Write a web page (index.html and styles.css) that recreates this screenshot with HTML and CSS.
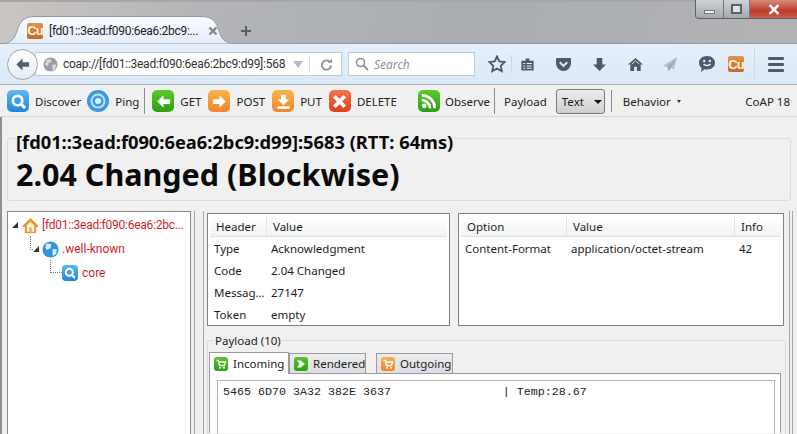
FILE: index.html
```html
<!DOCTYPE html>
<html lang="en">
<head>
<meta charset="utf-8">
<title>Copper</title>
<link rel="stylesheet" href="styles.css">
</head>
<body>
<div class="window">
  <header class="titlebar">
    <div class="tab">
      <svg class="tab-shape" viewBox="0 0 230 28" preserveAspectRatio="none"><defs><linearGradient id="tabfill" x1="0" y1="0" x2="0" y2="1"><stop offset="0" stop-color="#f7fafd"/><stop offset="1" stop-color="#e3eefa"/></linearGradient></defs><path d="M0 28C8 27 12 22 14 15 17 5 21 .5 32 .5H198C209 .5 213 5 216 15 218 22 222 27 230 28Z" fill="url(#tabfill)" stroke="#8f9aa5" stroke-width="1"/></svg>
      <span class="cu cu-tab">Cu</span>
      <span class="tab-title">[fd01::3ead:f090:6ea6:2bc9:...</span>
      <svg class="tab-close" viewBox="0 0 10 10"><path d="M1.500 1.500l7 7M8.500 1.500l-7 7" stroke="#7d8790" stroke-width="2.400"/></svg>
    </div>
    <svg class="newtab" viewBox="0 0 12 12"><path d="M6 1v10M1 6h10" stroke="#55606b" stroke-width="2"/></svg>
    <div class="winctl">
      <span class="wbtn wmin"><i></i></span>
      <span class="wbtn wmax"><i></i></span>
      <span class="wbtn wclose">
        <svg viewBox="0 0 12 10"><path d="M2 1l8 8M10 1l-8 8" stroke="#fff" stroke-width="2.400"/></svg>
      </span>
    </div>
  </header>

  <nav class="navbar">
    <span class="back"><svg viewBox="0 0 16 16"><path d="M8 1.500L1.500 8 8 14.500V10.500h7v-5H8z" fill="#525f6c"/></svg></span>
    <div class="urlbar">
      <svg class="globe" viewBox="0 0 16 16"><circle cx="8" cy="8" r="7.500" fill="#9a9ea3"/><path d="M4 3l4-1 1 3-3 2-1 3-3-2zM10 8l4 0-1 5-3 1z" fill="#d6d8da"/></svg>
      <span class="url">coap://[fd01::3ead:f090:6ea6:2bc9:d99]:568</span>
      <svg class="dropdown" viewBox="0 0 10 7"><path d="M0 0h10L5 7z" fill="#b7bdc3"/></svg>
      <span class="url-sep"></span>
      <svg class="reload" viewBox="0 0 14 14"><path d="M11 4.500A5 5 0 1 0 12 8" fill="none" stroke="#8a9199" stroke-width="2"/><path d="M8.500 5H13V.8z" fill="#8a9199"/></svg>
    </div>
    <div class="searchbar">
      <svg class="lens" viewBox="0 0 14 14"><circle cx="5.500" cy="5.500" r="4" fill="none" stroke="#8b929a" stroke-width="1.600"/><path d="M8.500 8.500l4.500 4.500" stroke="#8b929a" stroke-width="2"/></svg>
      <span class="search-text">Search</span>
    </div>
    <div class="navicons">
      <svg class="nav-star" viewBox="0 0 18 18"><path d="M9 1.500l2.300 5 5.400.6-4 3.700 1.100 5.400L9 13.500l-4.800 2.700 1.100-5.400-4-3.700 5.400-.6z" fill="none" stroke="#4d5a67" stroke-width="1.800"/></svg>
      <span class="nav-sep"></span>
      <svg class="nav-list" viewBox="0 0 16 16"><path d="M1.500 4h13v10.500h-13zM6 1.500h4v3H6z" fill="#4d5a67"/><path d="M3.500 6.500h2v1h-2zM7 6.500h5.500v1H7zM3.500 9h2v1h-2zM7 9h5.500v1H7zM3.500 11.500h2v1h-2zM7 11.500h5.500v1H7z" fill="#e8f0f8"/></svg>
      <svg class="nav-pocket" viewBox="0 0 18 16"><path d="M1 2.500Q1 1 2.500 1h13Q17 1 17 2.500V7a8 8 0 0 1-16 0z" fill="#4d5a67"/><path d="M5 5.500l4 4 4-4" fill="none" stroke="#d9e6f2" stroke-width="2.200"/></svg>
      <svg class="nav-down" viewBox="0 0 16 16"><path d="M5 1h6v7h4l-7 7-7-7h4z" fill="#4d5a67"/></svg>
      <svg class="nav-home" viewBox="0 0 18 16"><path d="M9 1L1 8h2.500v7h4v-4.500h3V15h4V8H17z" fill="#4d5a67"/><path d="M5 7.500l4-3.300 4 3.300" fill="none" stroke="#dfe9f3" stroke-width="1"/></svg>
      <svg class="nav-send" viewBox="0 0 18 18"><path d="M17 1L1 11l5 1.500 1.500 4.500 2.500-3.500 3.500 1.500z" fill="#b5c0ca"/><path d="M17 1L6 12.500l1.500 4.500 2.500-3.500z" fill="#9eabb7"/></svg>
      <svg class="nav-chat" viewBox="0 0 18 18"><path d="M9 1c4.500 0 8 2.800 8 6.800S13.500 14.500 9 14.500c-.8 0-1.500-.1-2.200-.2L3 17l.6-4C2 11.800 1 10 1 7.800 1 3.800 4.500 1 9 1z" fill="#4d5a67"/><circle cx="6.200" cy="6" r="1.200" fill="#e8f0f8"/><circle cx="11.800" cy="6" r="1.200" fill="#e8f0f8"/><path d="M5.500 9c1.500 2 5.500 2 7 0" fill="none" stroke="#e8f0f8" stroke-width="1.300"/></svg>
      <span class="cu cu-nav">Cu</span>
      <span class="nav-sep nav-sep-menu"></span>
      <span class="hamburger"><i></i><i></i><i></i></span>
    </div>
  </nav>

  <div class="toolbar">
    <button class="tool tool-discover"><span class="ico ico-blue"><svg viewBox="0 0 20 20"><circle cx="9" cy="9" r="5" fill="none" stroke="#fff" stroke-width="2.800"/><path d="M12.500 12.500l4.500 4.500" stroke="#fff" stroke-width="3.200"/></svg></span><span>Discover</span></button>
    <button class="tool tool-ping"><span class="ico ico-ring"><svg viewBox="0 0 22 22"><circle cx="11" cy="11" r="7.500" fill="#c4e2fa"/><circle cx="11" cy="11" r="5.500" fill="#3b9be6"/><circle cx="11" cy="11" r="3" fill="#e4f2fe"/></svg></span><span>Ping</span></button>
    <span class="tsep"></span>
    <button class="tool"><span class="ico ico-green"><svg viewBox="0 0 20 20"><path d="M10 3.500L3.500 10 10 16.500V12.500h7v-5h-7z" fill="#fff"/></svg></span><span>GET</span></button>
    <button class="tool"><span class="ico ico-orange"><svg viewBox="0 0 20 20"><path d="M10 3.500L16.500 10 10 16.500V12.500H3v-5h7z" fill="#fff"/></svg></span><span>POST</span></button>
    <button class="tool"><span class="ico ico-orange"><svg viewBox="0 0 20 20"><path d="M7.500 3h5v5H16l-6 6-6-6h3.500zM3.500 15h13v2.500h-13z" fill="#fff"/></svg></span><span>PUT</span></button>
    <button class="tool"><span class="ico ico-red"><svg viewBox="0 0 20 20"><path d="M4.500 4.500l11 11M15.500 4.500l-11 11" stroke="#fff" stroke-width="4"/></svg></span><span>DELETE</span></button>
    <button class="tool tool-observe"><span class="ico ico-green"><svg viewBox="0 0 20 20"><circle cx="5.500" cy="14.500" r="2.500" fill="#fff"/><path d="M3 8.500A8.500 8.500 0 0 1 11.500 17M3 3.500A13.500 13.500 0 0 1 16.500 17" fill="none" stroke="#fff" stroke-width="3"/></svg></span><span>Observe</span></button>
    <span class="tsep tsep-observe"></span>
    <span class="tlabel">Payload</span>
    <button class="select">Text<span class="caret"></span></button>
    <span class="tsep tsep-select"></span>
    <span class="tlabel tlabel-behavior">Behavior<span class="caret-small"></span></span>
    <span class="version">CoAP 18</span>
  </div>

  <main class="content">
    <section class="status">
      <div class="status-addr">[fd01::3ead:f090:6ea6:2bc9:d99]:5683 (RTT: 64ms)</div>
      <div class="status-code">2.04 Changed (Blockwise)</div>
    </section>

    <div class="panes">
      <aside class="tree">
        <div class="node node-root">
          <span class="twisty"></span>
          <svg class="node-ico" viewBox="0 0 18 18"><path d="M9 1L0.500 9.500 2 11l1-1v7h12v-7l1 1 1.500-1.500z" fill="#f0902a"/><path d="M5 9l4-4 4 4v6.500H5z" fill="#fff3e0"/><path d="M7.500 11h3v4.500h-3z" fill="#f7b36a"/></svg>
          <span class="node-text node-text-root">[fd01::3ead:f090:6ea6:2bc...</span>
        </div>
        <div class="node node-l1">
          <span class="guide"></span>
          <span class="twisty"></span>
          <svg class="node-ico" viewBox="0 0 18 18"><circle cx="9" cy="9" r="8.500" fill="#2e95e8"/><path d="M5 2.500l5 1-1 4-4 2-1.500-3zM11 9l4.500-.5-.5 5-3.500 2.500z" fill="#e4f2fd"/></svg>
          <span class="node-text">.well-known</span>
        </div>
        <div class="node node-l2">
          <span class="guide"></span>
          <span class="ico ico-blue ico-small"><svg viewBox="0 0 20 20"><circle cx="9" cy="9" r="5" fill="none" stroke="#fff" stroke-width="2.800"/><path d="M12.500 12.500l4.500 4.500" stroke="#fff" stroke-width="3.200"/></svg></span>
          <span class="node-text">core</span>
        </div>
      </aside>

      <span class="splitter"></span>

      <div class="details">
        <div class="tables">
          <div class="tbox tbox-header">
            <div class="thead"><span class="th col-h1">Header</span><span class="th th-fill">Value</span></div>
            <div class="trow"><span class="col-h1">Type</span><span>Acknowledgment</span></div>
            <div class="trow"><span class="col-h1">Code</span><span>2.04 Changed</span></div>
            <div class="trow"><span class="col-h1">Messag...</span><span>27147</span></div>
            <div class="trow"><span class="col-h1">Token</span><span>empty</span></div>
          </div>
          <div class="tbox tbox-option">
            <div class="thead"><span class="th col-o1">Option</span><span class="th col-o2">Value</span><span class="th th-fill">Info</span></div>
            <div class="trow"><span class="col-o1">Content-Format</span><span class="col-o2">application/octet-stream</span><span>42</span></div>
          </div>
        </div>

        <section class="payload">
          <span class="legend">Payload (10)</span>
          <div class="tabs">
            <span class="ptab ptab-active"><span class="cart cart-green"><svg viewBox="0 0 12 12"><path d="M1.500 2.500h2l1 5h5l1-3.500h-6.500" fill="none" stroke="#fff" stroke-width="1.300"/><circle cx="5" cy="9.800" r="1" fill="#fff"/><circle cx="9" cy="9.800" r="1" fill="#fff"/></svg></span>Incoming</span>
            <span class="ptab ptab-rendered"><span class="cart cart-green"><svg viewBox="0 0 12 12"><path d="M2 2.500h3.500l4.500 3.500-4.500 3.500H2l2.500-3.500z" fill="#fff"/></svg></span>Rendered</span>
            <span class="ptab ptab-out"><span class="cart cart-orange"><svg viewBox="0 0 12 12"><path d="M1.500 2.500h2l1 5h5l1-3.500h-6.500" fill="none" stroke="#fff" stroke-width="1.300"/><circle cx="5" cy="9.800" r="1" fill="#fff"/><circle cx="9" cy="9.800" r="1" fill="#fff"/></svg></span>Outgoing</span>
          </div>
          <div class="tabpanel">
            <pre class="hexdump">5465 6D70 3A32 382E 3637                | Temp:28.67</pre>
          </div>
        </section>
      </div>
      <span class="edge"></span>
    </div>
  </main>
</div>
</body>
</html>
```
FILE: styles.css
```css
* { box-sizing: border-box; }
html, body { margin: 0; padding: 0; height: 100%; overflow: hidden; }
body { font-family: "Noto Sans", "Open Sans", sans-serif; font-size: 11.5px; color: #1d1d1d; background: #f0f0f0; }
.window { width: 797px; height: 434px; display: flex; flex-direction: column; overflow: hidden; }

/* Title bar */
.titlebar { height: 44px; flex: none; display: flex; align-items: flex-end; padding-left: 3px; background: linear-gradient(100deg, #c9c6c3 0%, #b3b5b8 25%, #a9adb2 60%, #b2b3b4 100%); border-top: 2px solid #a8a5a2; border-bottom: 1px solid #8e9aa6; position: relative; }
.tab { width: 230px; height: 28px; margin-bottom: -1px; display: flex; align-items: center; padding: 1px 0 0 24px; position: relative; z-index: 1; }
.tab-shape { position: absolute; left: 0; top: 0; width: 230px; height: 28px; }
.cu { display: inline-flex; align-items: center; justify-content: center; width: 16px; height: 16px; border-radius: 2px; background: linear-gradient(#e0934f, #c26a30); color: #fff3d0; font-size: 13px; font-weight: 700; letter-spacing: -1px; font-family: "Liberation Sans", sans-serif; flex: none; position: relative; }
.tab-title { margin-left: 6px; font-family: Roboto, sans-serif; font-size: 12px; letter-spacing: -0.3px; color: #222; white-space: nowrap; width: 153px; position: relative; }
.tab-close { width: 10px; height: 10px; margin-left: 6px; flex: none; position: relative; }
.newtab { width: 12px; height: 12px; margin: 0 0 6px 7px; }
.winctl { position: absolute; right: 0; top: -2px; display: flex; height: 19px; border: 1px solid #5f5f5f; border-top: 0; border-right: 0; border-radius: 0 0 0 4px; overflow: hidden; }
.wbtn { display: flex; align-items: center; justify-content: center; height: 100%; }
.wmin { width: 28px; background: linear-gradient(#d0d3d6, #a5a8ac); border-right: 1px solid #777; }
.wmin i { width: 11px; height: 4px; margin-top: 5px; background: #eef1f4; border: 1px solid #777; }
.wmax { width: 26px; background: linear-gradient(#d0d3d6, #a5a8ac); border-right: 1px solid #777; }
.wmax i { width: 11px; height: 10px; border: 2px solid #59626c; background: #dfe3e7; }
.wclose { width: 47px; background: linear-gradient(#d58a7e, #bf3a2a 60%, #c9604f); }
.wclose svg { width: 14px; height: 11px; }

/* Nav bar */
.navbar { height: 41px; flex: none; display: flex; align-items: center; padding-left: 7px; background: linear-gradient(#e5f0fb, #dbe8f5); border-bottom: 1px solid #aab2ba; position: relative; }
.back { width: 31px; height: 31px; border-radius: 50%; background: linear-gradient(#fff, #e4ebf2); border: 1px solid #9ba8b5; display: flex; align-items: center; justify-content: center; z-index: 1; flex: none; }
.back svg { width: 15px; height: 15px; }
.urlbar { width: 307px; height: 24px; margin-left: -3px; background: #fff; border: 1px solid #c3cdd7; display: flex; align-items: center; padding-left: 7px; flex: none; }
.globe { width: 15px; height: 15px; flex: none; }
.url { margin-left: 5px; font-family: Roboto, sans-serif; font-size: 12px; letter-spacing: -0.26px; color: #333; white-space: nowrap; width: 225px; flex: none; }
.dropdown { width: 10px; height: 7px; margin-left: 5px; flex: none; }
.url-sep { width: 1px; height: 17px; background: #d5dbe1; margin-left: 6px; flex: none; }
.reload { width: 13px; height: 13px; margin-left: 10px; flex: none; }
.searchbar { width: 127px; height: 24px; margin-left: 6px; background: #fff; border: 1px solid #c3cdd7; display: flex; align-items: center; padding-left: 6px; flex: none; }
.lens { width: 14px; height: 14px; flex: none; }
.search-text { margin-left: 5px; font-style: italic; color: #8f959b; font-size: 12px; }
.navicons { display: flex; align-items: center; margin-left: 13px; flex: none; }
.navicons svg { flex: none; }
.nav-star { width: 18px; height: 18px; }
.nav-sep { width: 1px; height: 18px; background: #cfd8e1; margin-left: 5px; }
.nav-list { width: 15px; height: 15px; margin-left: 8px; }
.nav-pocket { width: 17px; height: 15px; margin-left: 20px; }
.nav-down { width: 15px; height: 15px; margin-left: 20px; }
.nav-home { width: 17px; height: 15px; margin-left: 20px; }
.nav-send { width: 16px; height: 16px; margin-left: 18px; }
.nav-chat { width: 18px; height: 18px; margin-left: 20px; }
.cu-nav { margin-left: 12px; }
.nav-sep-menu { height: 32px; margin-left: 10px; }
.hamburger { display: flex; flex-direction: column; gap: 3px; margin-left: 13px; }
.hamburger i { display: block; width: 16px; height: 3px; border-radius: 1px; background: #4d5a67; }

/* Toolbar */
.toolbar { height: 32px; flex: none; display: flex; align-items: center; padding: 1px 0 0 7px; background: #f0f0f0; border-bottom: 1px solid #d6d6d6; font-size: 11.5px; }
.tool { display: flex; align-items: center; gap: 6px; padding: 0; border: 0; background: none; font: inherit; color: #222; margin-right: 7px; white-space: nowrap; }
.ico { width: 22px; height: 22px; border-radius: 5px; display: inline-flex; align-items: center; justify-content: center; flex: none; }
.ico svg { width: 19px; height: 19px; display: block; }
.ico-blue { background: linear-gradient(#5db8f5, #1c86dd); }
.ico-ring { border-radius: 50%; background: radial-gradient(#4ea8ea, #2b8fdc); }
.ico-ring svg { width: 22px; height: 22px; }
.ico-green { background: linear-gradient(#5ec92c, #2e9e12); }
.ico-orange { background: linear-gradient(#fab24a, #f0862a); }
.ico-red { background: linear-gradient(#f5734a, #e0401c); }
.tool-discover { margin-right: 6px; }
.tool-ping { margin-right: 5px; }
.tsep { width: 1px; height: 26px; background: #8d8d8d; margin-right: 7px; flex: none; }
.tool-observe { margin-left: 14px; margin-right: 4px; gap: 5px; }
.tsep-observe { margin-right: 9px; }
.tlabel { white-space: nowrap; color: #222; display: inline-flex; align-items: center; }
.select { width: 49px; height: 25px; margin: 1px 6px 0 9px; padding: 0 0 0 5px; display: flex; align-items: center; border: 1px solid #7b7b7b; border-radius: 3px; background: linear-gradient(#ececec, #cfcfcf); font: inherit; color: #222; }
.caret { margin-left: 10px; border: 4px solid transparent; border-top: 4px solid #111; border-bottom: 0; }
.tsep-select { height: 22px; margin-right: 11px; }
.caret-small { margin-left: 6px; border: 2px solid transparent; border-top: 3px solid #333; border-bottom: 0; }
.version { margin-left: auto; margin-right: 7px; color: #222; }

/* Content */
.content { flex: 1; min-height: 0; display: flex; flex-direction: column; padding: 21px 6px 0 7px; background: #f0f0f0; border-left: 2px solid #938f8c; }
.status { height: 63px; margin-left: -2px; flex: none; border: 1px solid #dcdcdc; border-radius: 3px; padding-left: 8px; color: #0a0a0a; font-weight: 700; }
.status-addr { font-size: 18.3px; line-height: 20px; margin-top: -7px; background: #f0f0f0; width: max-content; padding: 0 1px 0 0; }
.status-code { font-size: 30.5px; line-height: 40px; margin-top: 2px; }

.panes { flex: 1; min-height: 0; display: flex; margin-top: 10px; margin-left: -2px; }
.tree { width: 184px; flex: none; background: #fff; border: 1px solid #8a8a8a; border-bottom: 0; padding: 1px 0 0 4px; color: #cf1f25; font-family: Roboto, sans-serif; font-size: 12px; }
.node { height: 24px; display: flex; align-items: center; position: relative; white-space: nowrap; }
.twisty { width: 0; height: 0; border-style: solid; border-width: 0 0 6px 6px; border-color: transparent transparent #333 transparent; margin-right: 4px; flex: none; }
.node-ico { width: 17px; height: 17px; flex: none; }
.node-text { margin-left: 3px; }
.node-text-root { letter-spacing: -0.25px; }
.node-l1 { padding-left: 21px; }
.node-l1 .twisty { margin-right: 3px; }
.node-l2 { padding-left: 50px; }
.node-l2 .node-text { margin-left: 4px; }
.ico-small { width: 16px; height: 16px; border-radius: 4px; }
.ico-small svg { width: 14px; height: 14px; }
.guide { position: absolute; border-left: 1px dotted #777; border-bottom: 1px dotted #777; }
.node-l1 .guide { left: 18px; top: -1px; width: 3px; height: 14px; }
.node-l2 .guide { left: 38px; top: -1px; width: 12px; height: 13px; }

.splitter { width: 10px; flex: none; border-left: 1px solid #a8a8a8; border-right: 1px solid #a8a8a8; margin: 0 3px; }
.details { width: 578px; flex: none; padding-top: 2px; }
.tables { display: flex; gap: 8px; height: 113px; }
.tbox { background: #fff; border: 1px solid #808080; padding: 2px; height: 113px; overflow: hidden; }
.tbox-header { width: 243px; }
.tbox-option { width: 326px; }
.thead { display: flex; height: 21px; align-items: center; background: linear-gradient(#fff, #f2f3f4); border-bottom: 1px solid #dfe1e3; }
.th { padding-left: 6px; height: 100%; display: flex; align-items: center; border-right: 1px solid #e6e7e8; }
.th-fill { flex: 1; border-right: 0; }
.trow { display: flex; height: 22px; align-items: center; padding-left: 4px; white-space: nowrap; }
.col-h1 { width: 57px; flex: none; }
.col-o1 { width: 106px; flex: none; }
.col-o2 { width: 168px; flex: none; }
.thead .col-o1 { width: 106px; }
.thead .col-o2 { width: 168px; }

.payload { position: relative; margin-top: 14px; height: 100px; border: 1px solid #dcdcdc; border-bottom: 0; border-radius: 3px 3px 0 0; padding: 9px 4px 0 1px; margin-right: -1px; }
.legend { position: absolute; left: 6px; top: -7px; background: #f0f0f0; padding: 0 1px; line-height: 14px; }
.tabs { display: flex; align-items: flex-end; height: 23px; }
.ptab { display: flex; align-items: center; width: 77px; height: 20px; border: 1px solid #9a9a9a; border-bottom: 0; background: linear-gradient(#ececec, #d9dfe6); padding: 0 0 0 4px; white-space: nowrap; gap: 5px; }
.ptab-active { width: 80px; height: 22px; background: #fff; margin-bottom: -1px; position: relative; z-index: 1; }
.ptab-out { margin-left: 10px; }
.cart { width: 14px; height: 14px; border-radius: 3px; display: inline-flex; align-items: center; justify-content: center; flex: none; }
.cart svg { width: 12px; height: 12px; }
.cart-green { background: linear-gradient(#58c42a, #2f9f14); }
.cart-orange { background: linear-gradient(#fbb04e, #ef8429); }
.tabpanel { border: 1px solid #9a9a9a; border-bottom: 0; background: #fff; padding: 6px 5px 0 7px; height: 60px; }
.hexdump { margin: 0; height: 60px; border: 1px solid #b5b5b5; border-bottom: 0; padding: 3px 5px; font-family: "Liberation Mono", monospace; font-size: 11.67px; line-height: 16px; color: #222; }
.edge { width: 4px; flex: none; margin-left: 4px; border-left: 1px solid #a8a8a8; border-right: 1px solid #a8a8a8; }
```
